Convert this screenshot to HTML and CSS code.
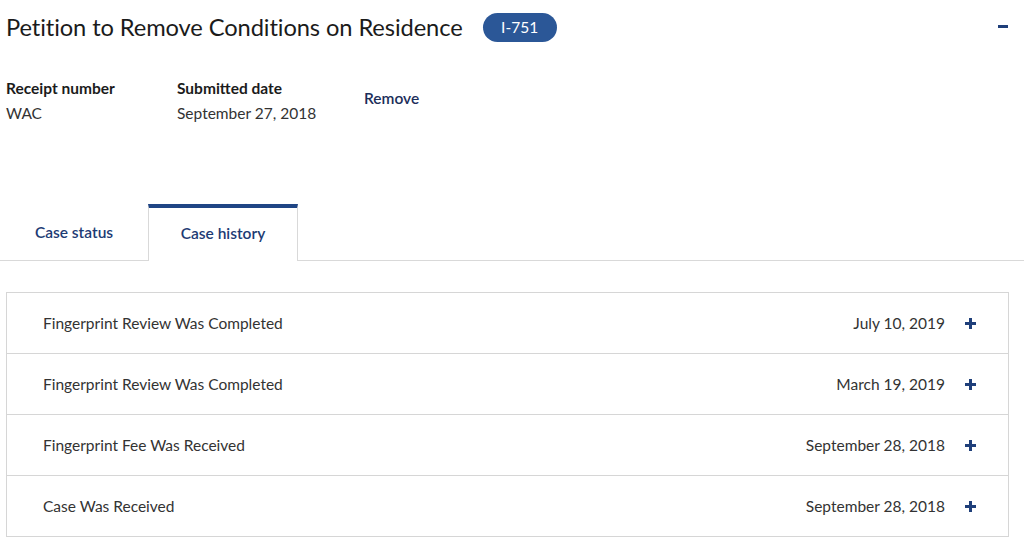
FILE: index.html
```html
<!DOCTYPE html>
<html>
<head>
<meta charset="utf-8">
<link rel="stylesheet" href="styles.css">
</head>
<body>
<div class="page">
  <div class="header">
    <h1 class="title">Petition to Remove Conditions on Residence</h1>
    <span class="badge">I-751</span>
    <span class="collapse"><span class="minus"></span></span>
  </div>
  <div class="meta">
    <div class="meta-col col1">
      <div class="label">Receipt number</div>
      <div class="value">WAC</div>
    </div>
    <div class="meta-col col2">
      <div class="label">Submitted date</div>
      <div class="value">September 27, 2018</div>
    </div>
    <div class="meta-col col3">
      <a class="remove">Remove</a>
    </div>
  </div>
  <div class="tabs">
    <div class="tab">Case status</div>
    <div class="tab active">Case history</div>
  </div>
  <div class="history">
    <div class="row"><span class="event">Fingerprint Review Was Completed</span><span class="date">July 10, 2019</span><span class="plus"></span></div>
    <div class="row"><span class="event">Fingerprint Review Was Completed</span><span class="date">March 19, 2019</span><span class="plus"></span></div>
    <div class="row"><span class="event">Fingerprint Fee Was Received</span><span class="date">September 28, 2018</span><span class="plus"></span></div>
    <div class="row"><span class="event">Case Was Received</span><span class="date">September 28, 2018</span><span class="plus"></span></div>
  </div>
</div>
</body>
</html>
```
FILE: styles.css
```css
html, body {
  margin: 0;
  padding: 0;
  background: #fff;
}
body {
  font-family: "Source Sans Pro", Lato, "Liberation Sans", sans-serif;
  color: #212121;
}
.page {
  width: 1024px;
}
.header {
  display: flex;
  align-items: center;
  height: 54px;
  padding-left: 6px;
}
.title {
  margin: 0;
  font-size: 23.7px;
  font-weight: 400;
  color: #1b1b1b;
  letter-spacing: -0.1px;
}
.badge {
  margin-left: 20px;
  background: #2b5797;
  color: #fff;
  border-radius: 15px;
  height: 29px;
  width: 74px;
  display: flex;
  align-items: center;
  justify-content: center;
  font-size: 15.5px;
}
.collapse {
  margin-left: auto;
  width: 10px;
  height: 10px;
  margin-right: 16px;
  margin-bottom: 2px;
  display: flex;
  align-items: center;
}
.minus {
  display: block;
  width: 10px;
  height: 3px;
  background: #1f3f7a;
}
.meta {
  display: flex;
  align-items: flex-start;
  padding-left: 6px;
  margin-top: 22px;
  height: 50px;
}
.meta-col {
  font-size: 15.5px;
  line-height: 25px;
}
.col1 { width: 171px; }
.col2 { width: 187px; }
.col3 { padding-top: 10px; }
.label {
  font-weight: 700;
  color: #1b1b1b;
}
.value {
  color: #333;
}
.remove {
  color: #1b2e5a;
  font-weight: 600;
  font-size: 15.5px;
}
.tabs {
  display: flex;
  margin-top: 78px;
  border-bottom: 1px solid #d9d9d9;
  height: 56px;
}
.tab {
  width: 148px;
  display: flex;
  align-items: center;
  justify-content: center;
  font-size: 15.5px;
  font-weight: 600;
  color: #1d3b74;
  box-sizing: border-box;
}
.tab.active {
  width: 150px;
  border-top: 4px solid #1f4585;
  border-left: 1px solid #d9d9d9;
  border-right: 1px solid #d9d9d9;
  margin-bottom: -1px;
  background: #fff;
  padding-bottom: 4px;
}
.history {
  margin: 31px 15px 0 6px;
  border: 1px solid #d6d6d6;
}
.row {
  display: flex;
  align-items: center;
  padding: 0 32px 0 36px;
  box-sizing: border-box;
  height: 60px;
  font-size: 15.5px;
  color: #333;
}
.row + .row {
  border-top: 1px solid #d6d6d6;
  height: 61px;
}
.event {
  flex: 1;
}
.date {
  margin-right: 20px;
}
.plus {
  position: relative;
  width: 11px;
  height: 11px;
}
.plus::before, .plus::after {
  content: "";
  position: absolute;
  background: #1f3f7a;
}
.plus::before {
  left: 0;
  top: 4px;
  width: 11px;
  height: 3px;
}
.plus::after {
  left: 4px;
  top: 0;
  width: 3px;
  height: 11px;
}
```
